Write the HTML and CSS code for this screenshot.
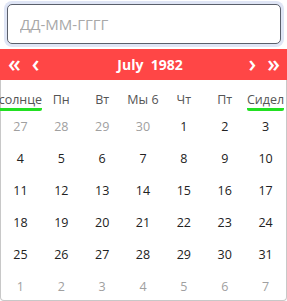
FILE: index.html
```html
<!DOCTYPE html>
<html lang="en">
	<head>
		<meta charset="UTF-8">
		<title>Datepicker</title>
		<link rel="stylesheet" href="styles.css">
	</head>
	<body>
		<div class="picker">
			<div class="field">
				<input type="text" class="dateInput" placeholder="ДД-ММ-ГГГГ">
			</div>
			<div class="calendar">
				<div class="calHead">
					<span class="nav">&laquo;</span>
					<span class="nav">&lsaquo;</span>
					<span class="title">July&nbsp; 1982</span>
					<span class="nav">&rsaquo;</span>
					<span class="nav">&raquo;</span>
				</div>
				<div class="weekdays">
					<span class="wd"><b class="mark">солнце</b></span>
					<span class="wd">Пн</span>
					<span class="wd">Вт</span>
					<span class="wd">Мы 6</span>
					<span class="wd">Чт</span>
					<span class="wd">Пт</span>
					<span class="wd"><b class="mark">Сидел</b></span>
				</div>
				<div class="days">
					<span class="day other">27</span>
					<span class="day other">28</span>
					<span class="day other">29</span>
					<span class="day other">30</span>
					<span class="day">1</span>
					<span class="day">2</span>
					<span class="day">3</span>
					<span class="day">4</span>
					<span class="day">5</span>
					<span class="day">6</span>
					<span class="day">7</span>
					<span class="day">8</span>
					<span class="day">9</span>
					<span class="day">10</span>
					<span class="day">11</span>
					<span class="day">12</span>
					<span class="day">13</span>
					<span class="day">14</span>
					<span class="day">15</span>
					<span class="day">16</span>
					<span class="day">17</span>
					<span class="day">18</span>
					<span class="day">19</span>
					<span class="day">20</span>
					<span class="day">21</span>
					<span class="day">22</span>
					<span class="day">23</span>
					<span class="day">24</span>
					<span class="day">25</span>
					<span class="day">26</span>
					<span class="day">27</span>
					<span class="day">28</span>
					<span class="day">29</span>
					<span class="day">30</span>
					<span class="day">31</span>
					<span class="day other">1</span>
					<span class="day other">2</span>
					<span class="day other">3</span>
					<span class="day other">4</span>
					<span class="day other">5</span>
					<span class="day other">6</span>
					<span class="day other">7</span>
				</div>
			</div>
		</div>
	</body>
</html>
```

FILE: styles.css
```css
body {
	margin: 0;
	font-family: "Open Sans", Arial, sans-serif;
	background: #fff;
}
.picker {
	width: 287px;
}
.field {
	padding: 4px 6px 5px 7px;
}
.dateInput {
	display: block;
	width: 100%;
	height: 40px;
	box-sizing: border-box;
	padding: 0 12px;
	border: 1px solid #5a5f6b;
	border-radius: 5px;
	box-shadow: 0 0 0 3px #dfe5f5;
	font-family: "Open Sans", Arial, sans-serif;
	font-size: 15px;
	outline: none;
}
.dateInput::placeholder {
	color: #a8a8a8;
}
.calendar {
	border: 1px solid #c8c8c8;
	border-top: none;
	border-radius: 0 0 4px 4px;
	height: 251px;
	box-sizing: content-box;
}
.calHead {
	display: flex;
	align-items: center;
	height: 31px;
	margin: 0 -1px;
	padding: 0 7px 0 8px;
	background-color: #ff4646;
	color: white;
	font-weight: bold;
}
.nav {
	font-size: 23px;
	font-weight: 600;
	line-height: 31px;
	margin-right: 11px;
	margin-top: -3px;
}
.nav:last-child {
	margin-right: 0;
}
.title {
	flex: 1;
	text-align: center;
	font-size: 14px;
	padding-left: 1px;
}
.weekdays {
	display: grid;
	grid-template-columns: repeat(7, 1fr);
	padding-top: 13px;
	margin-left: -1px;
	line-height: 14px;
	font-size: 12.5px;
	color: #555;
}
.wd {
	text-align: center;
	white-space: nowrap;
}
.mark {
	font-weight: normal;
	display: inline-block;
	margin: 0 -3px;
	padding-bottom: 1px;
	border-bottom: 3px solid #22e022;
	border-radius: 2px;
	line-height: 14px;
}
.days {
	display: grid;
	grid-template-columns: repeat(7, 1fr);
	margin-left: -1px;
}
.day {
	text-align: center;
	line-height: 32px;
	font-size: 12.5px;
	color: #222;
}
.other {
	color: #a0a0a0;
}
```
